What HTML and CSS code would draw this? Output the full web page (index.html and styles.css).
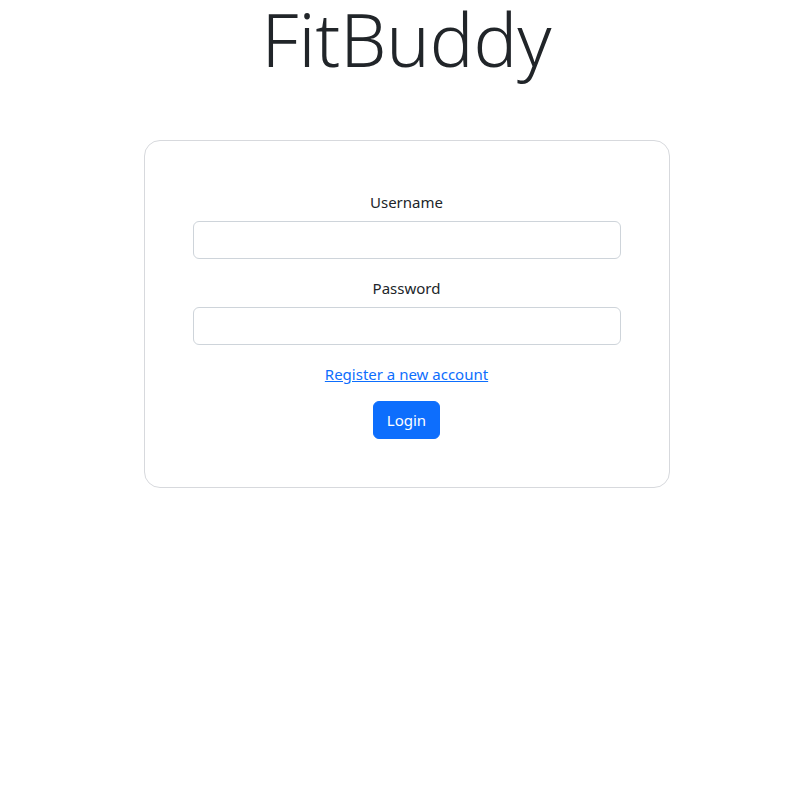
FILE: index.html
```html
<!DOCTYPE html>
<html lang="en">
<head>
<meta charset="utf-8">
<title>FitBuddy</title>
<link rel="stylesheet" href="styles.css">
</head>
<body>
<main class="page">
  <h1 class="brand">FitBuddy</h1>
  <form class="card">
    <div class="field">
      <label class="label" for="username">Username</label>
      <input class="input" id="username" type="text">
    </div>
    <div class="field">
      <label class="label" for="password">Password</label>
      <input class="input" id="password" type="password">
    </div>
    <a class="link" href="#">Register a new account</a>
    <button class="btn" type="button">Login</button>
  </form>
</main>
</body>
</html>
```
FILE: styles.css
```css
html, body {
  margin: 0;
  padding: 0;
  background: #fff;
}
body {
  font-family: "Noto Sans", "Open Sans", sans-serif;
  font-size: 15px;
  line-height: 24px;
  color: #212529;
}
.page {
  display: flex;
  flex-direction: column;
  align-items: center;
  padding-left: 13px;
}
.brand {
  margin: 0 0 62px;
  font-weight: 300;
  font-size: 73px;
  line-height: 78px;
  color: #212529;
}
.card {
  box-sizing: border-box;
  width: 526px;
  border: 1px solid #d7d9dd;
  border-radius: 16px;
  padding: 49px 48px 48px;
  display: flex;
  flex-direction: column;
  align-items: center;
}
.field {
  width: 100%;
  display: flex;
  flex-direction: column;
  align-items: center;
  margin-bottom: 17px;
}
.label {
  margin-bottom: 7px;
}
.input {
  box-sizing: border-box;
  width: 100%;
  height: 38px;
  border: 1px solid #ced4da;
  border-radius: 6px;
  padding: 6px 12px;
  font: inherit;
}
.link {
  color: #0d6efd;
  text-decoration: underline;
  margin-bottom: 15px;
}
.btn {
  font: inherit;
  color: #fff;
  background: #0d6efd;
  border: 1px solid #0d6efd;
  border-radius: 6px;
  height: 38px;
  padding: 0 13px;
}
```
